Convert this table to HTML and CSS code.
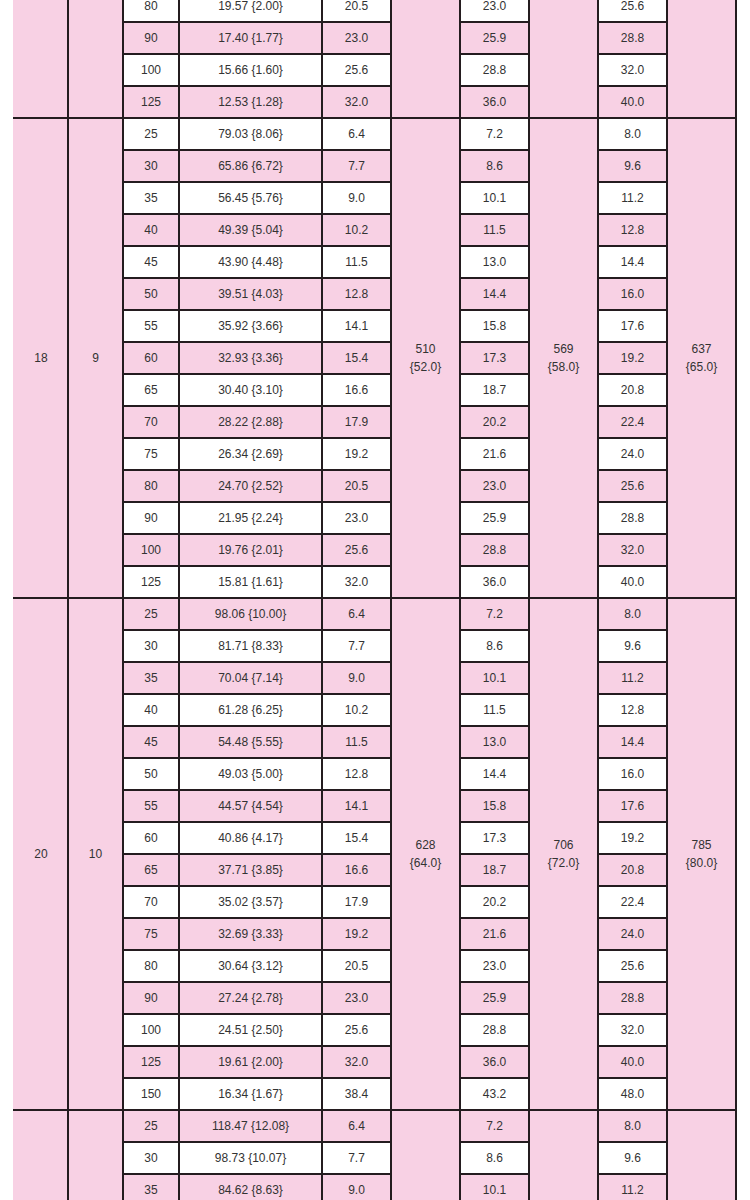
FILE: index.html
```html
<!DOCTYPE html>
<html>
<head>
<meta charset="utf-8">
<link rel="stylesheet" href="styles.css">
</head>
<body>
<table class="spec">
<colgroup>
<col class="c-a"><col class="c-b"><col class="c-c"><col class="c-d"><col class="c-e"><col class="c-f"><col class="c-g"><col class="c-h"><col class="c-i"><col class="c-j">
</colgroup>
<tbody>
<tr><td class="span" rowspan="4"></td><td class="span" rowspan="4"></td><td>80</td><td>19.57 {2.00}</td><td>20.5</td><td class="span" rowspan="4"></td><td>23.0</td><td class="span" rowspan="4"></td><td>25.6</td><td class="span" rowspan="4"></td></tr>
<tr class="p"><td>90</td><td>17.40 {1.77}</td><td>23.0</td><td>25.9</td><td>28.8</td></tr>
<tr><td>100</td><td>15.66 {1.60}</td><td>25.6</td><td>28.8</td><td>32.0</td></tr>
<tr class="p"><td>125</td><td>12.53 {1.28}</td><td>32.0</td><td>36.0</td><td>40.0</td></tr>
</tbody>
<tbody>
<tr><td class="span" rowspan="15">18</td><td class="span" rowspan="15">9</td><td>25</td><td>79.03 {8.06}</td><td>6.4</td><td class="span" rowspan="15">510<br>{52.0}</td><td>7.2</td><td class="span" rowspan="15">569<br>{58.0}</td><td>8.0</td><td class="span" rowspan="15">637<br>{65.0}</td></tr>
<tr class="p"><td>30</td><td>65.86 {6.72}</td><td>7.7</td><td>8.6</td><td>9.6</td></tr>
<tr><td>35</td><td>56.45 {5.76}</td><td>9.0</td><td>10.1</td><td>11.2</td></tr>
<tr class="p"><td>40</td><td>49.39 {5.04}</td><td>10.2</td><td>11.5</td><td>12.8</td></tr>
<tr><td>45</td><td>43.90 {4.48}</td><td>11.5</td><td>13.0</td><td>14.4</td></tr>
<tr class="p"><td>50</td><td>39.51 {4.03}</td><td>12.8</td><td>14.4</td><td>16.0</td></tr>
<tr><td>55</td><td>35.92 {3.66}</td><td>14.1</td><td>15.8</td><td>17.6</td></tr>
<tr class="p"><td>60</td><td>32.93 {3.36}</td><td>15.4</td><td>17.3</td><td>19.2</td></tr>
<tr><td>65</td><td>30.40 {3.10}</td><td>16.6</td><td>18.7</td><td>20.8</td></tr>
<tr class="p"><td>70</td><td>28.22 {2.88}</td><td>17.9</td><td>20.2</td><td>22.4</td></tr>
<tr><td>75</td><td>26.34 {2.69}</td><td>19.2</td><td>21.6</td><td>24.0</td></tr>
<tr class="p"><td>80</td><td>24.70 {2.52}</td><td>20.5</td><td>23.0</td><td>25.6</td></tr>
<tr><td>90</td><td>21.95 {2.24}</td><td>23.0</td><td>25.9</td><td>28.8</td></tr>
<tr class="p"><td>100</td><td>19.76 {2.01}</td><td>25.6</td><td>28.8</td><td>32.0</td></tr>
<tr><td>125</td><td>15.81 {1.61}</td><td>32.0</td><td>36.0</td><td>40.0</td></tr>
</tbody>
<tbody>
<tr class="p"><td class="span" rowspan="16">20</td><td class="span" rowspan="16">10</td><td>25</td><td>98.06 {10.00}</td><td>6.4</td><td class="span" rowspan="16">628<br>{64.0}</td><td>7.2</td><td class="span" rowspan="16">706<br>{72.0}</td><td>8.0</td><td class="span" rowspan="16">785<br>{80.0}</td></tr>
<tr><td>30</td><td>81.71 {8.33}</td><td>7.7</td><td>8.6</td><td>9.6</td></tr>
<tr class="p"><td>35</td><td>70.04 {7.14}</td><td>9.0</td><td>10.1</td><td>11.2</td></tr>
<tr><td>40</td><td>61.28 {6.25}</td><td>10.2</td><td>11.5</td><td>12.8</td></tr>
<tr class="p"><td>45</td><td>54.48 {5.55}</td><td>11.5</td><td>13.0</td><td>14.4</td></tr>
<tr><td>50</td><td>49.03 {5.00}</td><td>12.8</td><td>14.4</td><td>16.0</td></tr>
<tr class="p"><td>55</td><td>44.57 {4.54}</td><td>14.1</td><td>15.8</td><td>17.6</td></tr>
<tr><td>60</td><td>40.86 {4.17}</td><td>15.4</td><td>17.3</td><td>19.2</td></tr>
<tr class="p"><td>65</td><td>37.71 {3.85}</td><td>16.6</td><td>18.7</td><td>20.8</td></tr>
<tr><td>70</td><td>35.02 {3.57}</td><td>17.9</td><td>20.2</td><td>22.4</td></tr>
<tr class="p"><td>75</td><td>32.69 {3.33}</td><td>19.2</td><td>21.6</td><td>24.0</td></tr>
<tr><td>80</td><td>30.64 {3.12}</td><td>20.5</td><td>23.0</td><td>25.6</td></tr>
<tr class="p"><td>90</td><td>27.24 {2.78}</td><td>23.0</td><td>25.9</td><td>28.8</td></tr>
<tr><td>100</td><td>24.51 {2.50}</td><td>25.6</td><td>28.8</td><td>32.0</td></tr>
<tr class="p"><td>125</td><td>19.61 {2.00}</td><td>32.0</td><td>36.0</td><td>40.0</td></tr>
<tr><td>150</td><td>16.34 {1.67}</td><td>38.4</td><td>43.2</td><td>48.0</td></tr>
</tbody>
<tbody>
<tr class="p"><td class="span" rowspan="3"></td><td class="span" rowspan="3"></td><td>25</td><td>118.47 {12.08}</td><td>6.4</td><td class="span" rowspan="3"></td><td>7.2</td><td class="span" rowspan="3"></td><td>8.0</td><td class="span" rowspan="3"></td></tr>
<tr><td>30</td><td>98.73 {10.07}</td><td>7.7</td><td>8.6</td><td>9.6</td></tr>
<tr class="p"><td>35</td><td>84.62 {8.63}</td><td>9.0</td><td>10.1</td><td>11.2</td></tr>
</tbody>
</table>
</body>
</html>
```

FILE: styles.css
```css
html, body {
  margin: 0;
  padding: 0;
  background: #ffffff;
  overflow: hidden;
}

.spec {
  margin: -11px 0 0 13px;
  border-collapse: collapse;
  table-layout: fixed;
  width: 722px;
  font-family: "Liberation Sans", Arial, sans-serif;
  font-size: 12px;
  color: #333333;
}

.c-a { width: 54px; }
.c-b { width: 55px; }
.c-c { width: 56px; }
.c-d { width: 143px; }
.c-e { width: 69px; }
.c-f { width: 69px; }
.c-g { width: 69px; }
.c-h { width: 69px; }
.c-i { width: 69px; }
.c-j { width: 69px; }

.spec td {
  height: 30px;
  padding: 0;
  border: 2px solid #241c1f;
  text-align: center;
  vertical-align: middle;
  line-height: 18px;
  background: #ffffff;
}

.spec tr.p td {
  background: #f8d1e4;
}

.spec td.span {
  background: #f8d1e4;
}

.spec tr td:first-child.span {
  border-left-color: #f8d1e4;
}
```
